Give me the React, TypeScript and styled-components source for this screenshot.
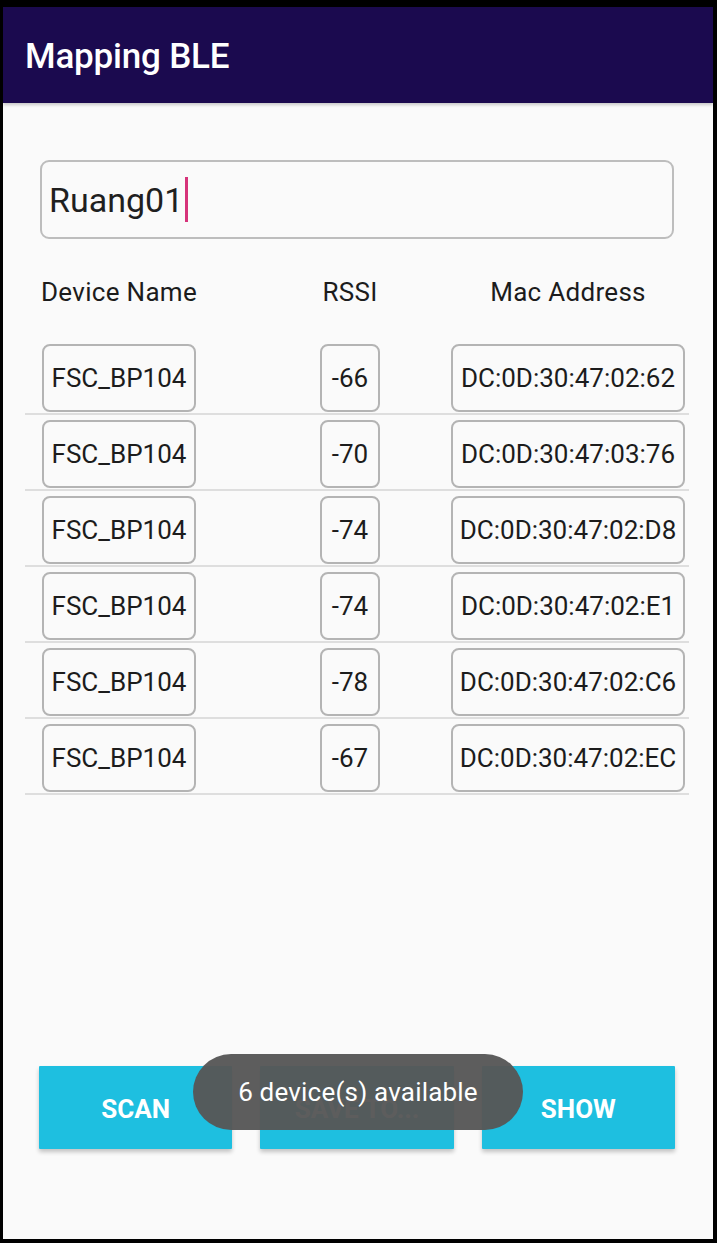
import React from "react";
import styled, { createGlobalStyle } from "styled-components";

const Global = createGlobalStyle`
  html, body { margin: 0; padding: 0; background: #000; }
  body { font-family: Roboto, "Noto Sans", sans-serif; }
`;

const Frame = styled.div`
  width: 717px;
  height: 1243px;
  box-sizing: border-box;
  padding: 7px 4px 4px 3px;
  background: #000;
`;

const Screen = styled.div`
  position: relative;
  height: 100%;
  background: #fafafa;
  display: flex;
  flex-direction: column;
  overflow: hidden;
`;

const AppBar = styled.header`
  height: 96px;
  background: #1b0a4f;
  display: flex;
  align-items: center;
  padding: 2px 0 0 22px;
  box-sizing: border-box;
  box-shadow: 0 2px 3px rgba(0, 0, 0, 0.2);
`;

const Title = styled.h1`
  margin: 0;
  color: #fff;
  font-size: 35px;
  font-weight: 500;
  letter-spacing: -0.2px;
`;

const Content = styled.main`
  flex: 1;
  display: flex;
  flex-direction: column;
`;

const InputBox = styled.div`
  margin: 57px 39px 0 37px;
  height: 79px;
  box-sizing: border-box;
  border: 2px solid #bdbdbd;
  border-radius: 9px;
  display: flex;
  align-items: center;
  padding: 0 0 0 7px;
  font-size: 34px;
  color: #1f1f1f;
`;

const Caret = styled.span`
  display: inline-block;
  width: 3px;
  height: 45px;
  margin-left: 2px;
  background: #d6337a;
`;

const Grid = styled.div`
  display: grid;
  grid-template-columns: 17px 154px 124px 60px 71px 234px 1fr;
  margin: 0 24px 0 22px;
`;

const LabelRow = styled(Grid)`
  margin-top: 38px;
  height: 30px;
  line-height: 30px;
`;

const Label = styled.div<{ $col: number }>`
  grid-column: ${(p) => p.$col};
  justify-self: center;
  white-space: nowrap;
  font-size: 26px;
  letter-spacing: 0.3px;
  color: #1c1c1c;
`;

const Rows = styled.div`
  margin-top: 32px;
  display: flex;
  flex-direction: column;
`;

const Row = styled(Grid)`
  padding-top: 5px;
  padding-bottom: 1px;
  border-bottom: 2px solid #dedede;
`;

const Cell = styled.div<{ $col: number }>`
  grid-column: ${(p) => p.$col};
  height: 68px;
  box-sizing: border-box;
  border: 2px solid #b4b4b4;
  border-radius: 8px;
  display: flex;
  align-items: center;
  justify-content: center;
  font-size: 26px;
  color: #1c1c1c;
  white-space: nowrap;
`;

const ButtonBar = styled.div`
  margin: auto 38px 90px 36px;
  display: flex;
  gap: 28px;
`;

const Button = styled.button`
  flex: 1;
  height: 83px;
  border: none;
  border-radius: 1px;
  background: #1ebfe0;
  color: #fff;
  font-family: Roboto, sans-serif;
  font-weight: 700;
  font-size: 26px;
  padding: 2px 0 0 0;
  box-shadow: 0 3px 4px rgba(0, 0, 0, 0.22);
`;

const Toast = styled.div`
  position: absolute;
  left: 50%;
  top: 1047px;
  transform: translateX(-50%);
  width: 330px;
  height: 76px;
  border-radius: 38px;
  background: rgba(86, 86, 86, 0.96);
  color: #fff;
  font-size: 26px;
  letter-spacing: 0.2px;
  display: flex;
  align-items: center;
  justify-content: center;
  padding-bottom: 1px;
  box-sizing: border-box;
  white-space: nowrap;
`;

const devices = [
  { name: "FSC_BP104", rssi: "-66", mac: "DC:0D:30:47:02:62" },
  { name: "FSC_BP104", rssi: "-70", mac: "DC:0D:30:47:03:76" },
  { name: "FSC_BP104", rssi: "-74", mac: "DC:0D:30:47:02:D8" },
  { name: "FSC_BP104", rssi: "-74", mac: "DC:0D:30:47:02:E1" },
  { name: "FSC_BP104", rssi: "-78", mac: "DC:0D:30:47:02:C6" },
  { name: "FSC_BP104", rssi: "-67", mac: "DC:0D:30:47:02:EC" },
];

export default function App() {
  return (
    <>
      <Global />
      <Frame>
        <Screen>
          <AppBar>
            <Title>Mapping BLE</Title>
          </AppBar>
          <Content>
            <InputBox>
              Ruang01
              <Caret />
            </InputBox>
            <LabelRow>
              <Label $col={2}>Device Name</Label>
              <Label $col={4}>RSSI</Label>
              <Label $col={6}>Mac Address</Label>
            </LabelRow>
            <Rows>
              {devices.map((d, i) => (
                <Row key={i}>
                  <Cell $col={2}>{d.name}</Cell>
                  <Cell $col={4}>{d.rssi}</Cell>
                  <Cell $col={6}>{d.mac}</Cell>
                </Row>
              ))}
            </Rows>
            <ButtonBar>
              <Button>SCAN</Button>
              <Button>SAVE TO...</Button>
              <Button>SHOW</Button>
            </ButtonBar>
          </Content>
          <Toast>6 device(s) available</Toast>
        </Screen>
      </Frame>
    </>
  );
}
